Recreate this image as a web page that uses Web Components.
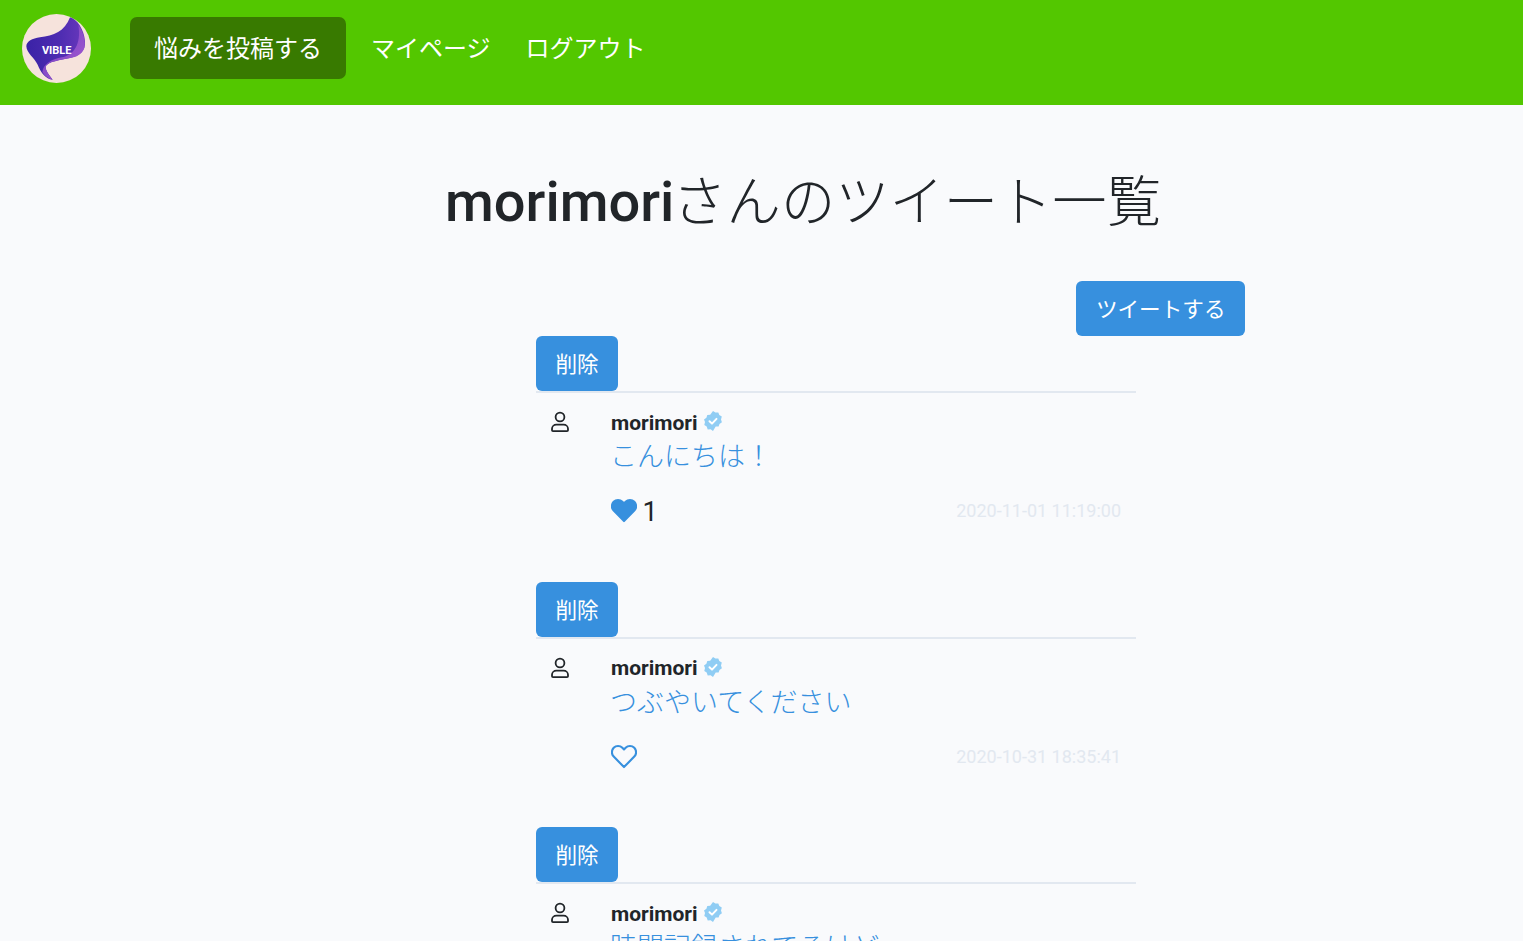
<!DOCTYPE html>
<html lang="ja">
<head>
<meta charset="utf-8">
<title>VIBLE</title>
<style>
html,body{margin:0;padding:0;height:941px;overflow:hidden;background:#f9fafc;}
body{font-family:Roboto,"Noto Sans CJK JP",sans-serif;color:#212529;}
</style>
</head>
<body>
<vb-nav></vb-nav>
<vb-main>
  <vb-tweet name="morimori" text="こんにちは！" date="2020-11-01 11:19:00" liked count="1"></vb-tweet>
  <vb-tweet name="morimori" text="つぶやいてください" date="2020-10-31 18:35:41"></vb-tweet>
  <vb-tweet name="morimori" text="時間記録されてるけど"></vb-tweet>
</vb-main>
<script>
const FONT = 'Roboto,"Noto Sans CJK JP",sans-serif';
class VbButton extends HTMLElement{
  constructor(){super();this.attachShadow({mode:'open'}).innerHTML=`<style>
  :host{display:inline-flex;align-items:center;justify-content:center;height:55px;padding:3px 19.5px 0;box-sizing:border-box;background:#3790de;color:#fff;border-radius:6px;font:400 21.6px/1 ${FONT};white-space:nowrap;flex:none}
  </style><slot></slot>`;}
}
customElements.define('vb-button',VbButton);

class VbNav extends HTMLElement{
  constructor(){super();this.attachShadow({mode:'open'}).innerHTML=`<style>
  :host{display:flex;align-items:center;height:105px;background:#53c700;padding:0 0 9px 22px;box-sizing:border-box;color:#fff;font:400 24px/1 ${FONT}}
  svg{width:69px;height:69px;flex:none;display:block;margin-right:39px}
  .post{display:flex;align-items:center;justify-content:center;height:62px;width:216px;box-sizing:border-box;padding-top:2px;background:#387a00;border-radius:7px;margin-right:25px}
  .link{margin-right:35px;white-space:nowrap;padding-top:2px}
  </style>
  <svg viewBox="21 18 207 207" aria-label="VIBLE">
    <defs>
      <linearGradient id="a" x1="0" x2="1" y1="0" y2="0"><stop offset="0" stop-color="#3a22a6"/><stop offset=".6" stop-color="#4f2db2"/><stop offset="1" stop-color="#6a38bc"/></linearGradient>
      <linearGradient id="b" x1="0" x2="1" y1="0" y2="1"><stop offset="0" stop-color="#6f3dc0"/><stop offset="1" stop-color="#a85dd2"/></linearGradient>
    </defs>
    <circle cx="124.5" cy="121.5" r="103.5" fill="#f6e3dc"/>
    <path d="M165 28C185 32 208 65 210 100C212 130 195 143 165 150C135 157 100 160 92 175C90 185 103 203 113 215C92 212 78 195 68 170C58 150 35 135 34 115C34 100 52 92 75 88C115 84 150 70 165 28Z" fill="url(#a)"/>
    <path d="M190 50C208 75 212 105 208 120C200 140 185 147 165 150C135 157 100 160 92 175C90 185 103 203 113 215C100 212 90 205 82 192C85 170 105 155 140 148C175 142 200 110 190 50Z" fill="url(#b)"/>
    <text x="125" y="138" text-anchor="middle" font-family="Roboto,sans-serif" font-weight="700" font-size="33" fill="#fff">VIBLE</text>
  </svg>
  <div class="post">悩みを投稿する</div>
  <div class="link">マイページ</div>
  <div class="link">ログアウト</div>`;}
}
customElements.define('vb-nav',VbNav);

class VbMain extends HTMLElement{
  constructor(){super();this.attachShadow({mode:'open'}).innerHTML=`<style>
  :host{display:block}
  h1{margin:0;padding:62px 0 0 83px;height:176px;box-sizing:border-box;text-align:center;font:500 56px/70px ${FONT};color:#212529;white-space:nowrap}
  h1 span{font-weight:300;font-size:54.3px;margin-left:-2px}
  .bar{display:flex;justify-content:flex-end;padding-right:278px}
  .list{margin-left:536px;width:600px}
  </style>
  <h1>morimori<span>さんのツイート一覧</span></h1>
  <div class="bar"><vb-button>ツイートする</vb-button></div>
  <div class="list"><slot></slot></div>`;}
}
customElements.define('vb-main',VbMain);

class VbTweet extends HTMLElement{
  constructor(){super();
    const name=this.getAttribute('name'),text=this.getAttribute('text'),date=this.getAttribute('date'),count=this.getAttribute('count')||'',liked=this.hasAttribute('liked');
    const foot=date?`<div class="foot">
          <div class="like"><svg viewBox="0 0 27 25"><path fill="${liked?'#3790de':'none'}" stroke="#3790de" stroke-width="2.2" stroke-linejoin="round" d="M13.5 23.5L2.8 12.6C.3 10 .4 6 2.8 3.5c2.5-2.5 6.500-2.5 9 0l1.7 1.7 1.7-1.7c2.5-2.5 6.5-2.5 9 0 2.4 2.5 2.5 6.5 0 9.1z"/></svg>${count}</div>
          <div class="date">${date}</div>
        </div>`:'';
    this.attachShadow({mode:'open'}).innerHTML=`<style>
    :host{display:block;height:245.5px;box-sizing:border-box}
    .line{border-bottom:2px solid #e2e8f0;height:55px;margin-bottom:2px;box-sizing:content-box;display:flex}
    .row{display:flex;padding:16px 15px 0 15px}
    .avatar{width:18px;height:22px;flex:none;margin-right:42px;display:block}
    .body{flex:1;min-width:0}
    .name{display:flex;align-items:center;height:22px;margin-top:.5px;font:700 21px/22px ${FONT};color:#212529}
    .name svg{width:20px;height:20px;margin:-3px 0 0 5px;flex:none}
    .text{font:300 27px/40px ${FONT};color:#3790de;margin:3.5px 0 0 -1px;white-space:nowrap}
    .foot{display:flex;align-items:center;justify-content:space-between;height:32px;margin-top:18.5px}
    .like{display:flex;align-items:center;font:400 27px/32px ${FONT};color:#212529}
    .like svg{width:26px;height:25px;flex:none;margin-right:6px;display:block;margin-top:-2px;margin-left:-.5px}
    .date{font:400 18px/24px ${FONT};color:#e2e8f0;margin-top:-1px}
    </style>
    <div class="line"><vb-button>削除</vb-button></div>
    <div class="row">
      <svg class="avatar" viewBox="0 0 18 22" fill="none" stroke="#212529" stroke-width="1.8"><circle cx="9" cy="6" r="4.4"/><path d="M1 19.2v-1.4c0-2.4 2-4.1 4.4-4.1h7.2c2.4 0 4.4 1.7 4.4 4.1v1.4c0 .6-.4 .9-1 .9H2c-.6 0-1-.3-1-.9z"/></svg>
      <div class="body">
        <div class="name">${name}<svg viewBox="0 0 20 20"><path fill="#90cdf4" d="M10 0l2.4 1.6 2.9-.2 1 2.7 2.5 1.5-.8 2.8 .9 2.800-2.4 1.700-.9 2.700-2.900 0L10 20l-2.400-1.700-2.900 .1-1-2.800L1.300 14l.7-2.900-1-2.700L3.400 6.700l.9-2.800 2.900-.1z"/><path fill="none" stroke="#fff" stroke-width="2" stroke-linecap="round" stroke-linejoin="round" d="M6.500 10.200l2.500 2.400 4.500-4.700"/></svg></div>
        <div class="text">${text}</div>
        ${foot}
      </div>
    </div>`;
  }
}
customElements.define('vb-tweet',VbTweet);
</script>
</body>
</html>
